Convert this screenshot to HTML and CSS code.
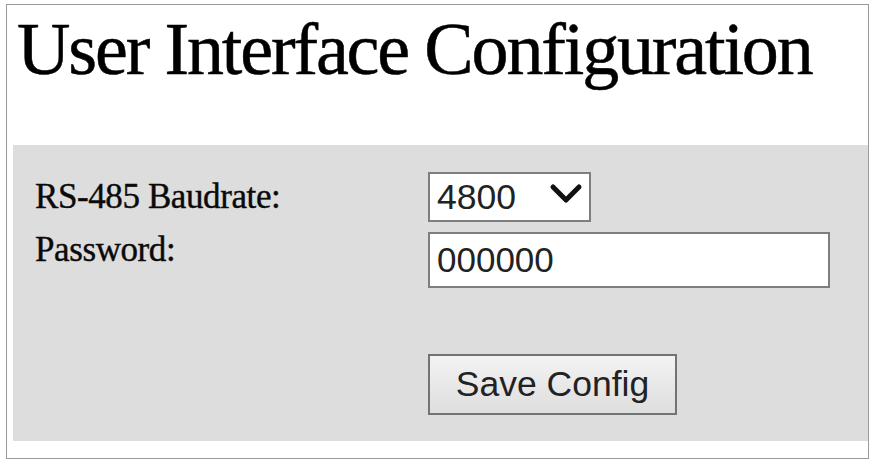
FILE: index.html
```html
<!DOCTYPE html>
<html lang="en">
<head>
<meta charset="utf-8">
<title>User Interface Configuration</title>
<link rel="stylesheet" href="styles.css">
</head>
<body>
<div class="frame">
  <header class="header">
    <h1 class="title">User Interface Configuration</h1>
  </header>
  <form class="panel">
    <label class="label label-baud" for="baud">RS-485 Baudrate:</label>
    <div class="select-wrap">
      <select id="baud" class="select">
        <option>4800</option>
        <option>9600</option>
        <option>19200</option>
      </select>
      <svg class="chevron" width="34" height="24" viewBox="0 0 34 24" aria-hidden="true">
        <path d="M4 5 L17 18 L30 5" fill="none" stroke="#111" stroke-width="5" stroke-linecap="round" stroke-linejoin="round"/>
      </svg>
    </div>
    <label class="label label-pass" for="pw">Password:</label>
    <input id="pw" class="input" type="text" value="000000">
    <button type="button" class="button">Save Config</button>
  </form>
</div>
</body>
</html>
```
FILE: styles.css
```css
html, body {
  margin: 0;
  padding: 0;
  background: #ffffff;
}

.frame {
  margin: 4px 0 0 6px;
  width: 861px;
  height: 453px;
  border: 1px solid #9a9a9a;
  background: #ffffff;
}

.header {
  height: 140px;
  padding-top: 4px;
  box-sizing: border-box;
}

.title {
  margin: 0;
  padding-left: 10px;
  font-family: "Liberation Serif", "Times New Roman", serif;
  font-weight: normal;
  font-size: 74px;
  line-height: 80px;
  letter-spacing: -2.15px;
  color: #000000;
  -webkit-text-stroke: 0.5px #000000;
}

.panel {
  margin: 0 0 0 6px;
  padding: 27px 0 26px 22px;
  background: #dddddd;
  display: grid;
  grid-template-columns: 393px 1fr;
  row-gap: 10px;
}

.label {
  font-family: "Liberation Serif", "Times New Roman", serif;
  font-size: 35px;
  line-height: 36px;
  letter-spacing: -0.4px;
  color: #0a0a0a;
  -webkit-text-stroke: 0.4px #0a0a0a;
}

.label-baud {
  align-self: center;
}

.label-pass {
  align-self: start;
}

.select-wrap {
  position: relative;
  width: 163px;
  height: 50px;
}

.select {
  appearance: none;
  -webkit-appearance: none;
  box-sizing: border-box;
  width: 163px;
  height: 50px;
  margin: 0;
  padding: 0 0 0 7px;
  border: 2px solid #7e7e7e;
  border-radius: 0;
  background: #ffffff;
  font-family: "Liberation Sans", Arial, sans-serif;
  font-size: 35.5px;
  color: #222222;
  outline: none;
}

.chevron {
  position: absolute;
  left: 121px;
  top: 10px;
  pointer-events: none;
}

.input {
  box-sizing: border-box;
  width: 402px;
  height: 56px;
  margin: 0;
  padding: 0 0 0 7px;
  border: 2px solid #7e7e7e;
  border-radius: 0;
  background: #ffffff;
  font-family: "Liberation Sans", Arial, sans-serif;
  font-size: 35px;
  color: #222222;
  outline: none;
}

.button {
  grid-column: 2;
  justify-self: start;
  box-sizing: border-box;
  width: 249px;
  height: 61px;
  margin-top: 56px;
  padding: 0;
  border: 2px solid #737373;
  border-radius: 0;
  background: linear-gradient(#f3f3f3, #dedede);
  font-family: "Liberation Sans", Arial, sans-serif;
  font-size: 35.5px;
  color: #222222;
}
```
